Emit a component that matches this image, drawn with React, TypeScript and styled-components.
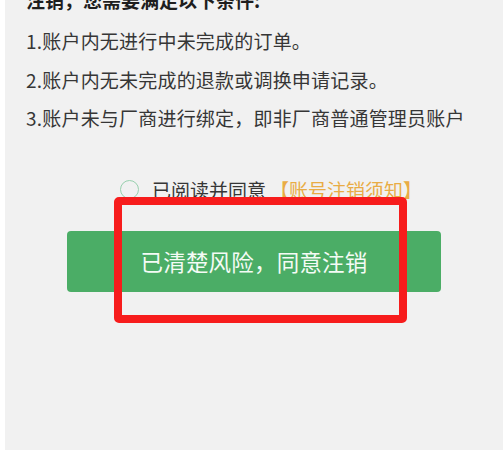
import { createGlobalStyle } from 'styled-components';
import styled from 'styled-components';

const GlobalStyle = createGlobalStyle`
    html, body {
        margin: 0;
        padding: 0;
        background: #ffffff;
    }
    body {
        font-family: "Noto Sans CJK SC", "Noto Sans", sans-serif;
    }
`;

const Screen = styled.div`
    display: flex;
    width: 503px;
    height: 450px;
    padding-left: 5px;
    box-sizing: border-box;
    background: #ffffff;
    overflow: hidden;
`;

const Page = styled.div`
    position: relative;
    flex: 1;
    display: flex;
    flex-direction: column;
    background: #f1f1f1;
`;

const Notice = styled.div`
    display: flex;
    flex-direction: column;
    padding-left: 21px;
    margin-top: -19px;
`;

const Heading = styled.div`
    font-size: 19px;
    line-height: 38px;
    font-weight: 700;
    color: #1e1e1e;
    margin-bottom: 3px;
`;

const Rule = styled.div`
    font-size: 19px;
    line-height: 38.5px;
    color: #363636;
    letter-spacing: 0.2px;
`;

const AgreeRow = styled.label`
    display: flex;
    align-items: center;
    height: 38px;
    margin-top: 33px;
    padding-left: 115px;
    font-size: 19px;
    color: #363636;
`;

const Radio = styled.span`
    width: 17px;
    height: 17px;
    border: 1.5px solid #98d0ae;
    border-radius: 50%;
    margin-right: 13px;
    flex-shrink: 0;
`;

const Link = styled.span`
    color: #e9ac45;
    margin-left: 4px;
`;

const ConfirmButton = styled.button`
    align-self: center;
    width: 374px;
    height: 61px;
    margin-top: 22px;
    border: none;
    border-radius: 4px;
    background: #4bad66;
    color: #f4fbf5;
    font-family: "Noto Sans CJK SC", "Noto Sans", sans-serif;
    font-size: 22.5px;
    letter-spacing: 0.2px;
    cursor: pointer;
`;

const Highlight = styled.div`
    position: absolute;
    left: 109px;
    top: 197px;
    width: 293px;
    height: 126px;
    box-sizing: border-box;
    border: 8.5px solid #f71c1c;
    border-radius: 5px;
    pointer-events: none;
`;

const rules = [
    '1.账户内无进行中未完成的订单。',
    '2.账户内无未完成的退款或调换申请记录。',
    '3.账户未与厂商进行绑定，即非厂商普通管理员账户',
];

export default function App() {
    return (
        <>
            <GlobalStyle />
            <Screen>
                <Page>
                    <Notice>
                        <Heading>注销，您需要满足以下条件:</Heading>
                        {rules.map((r) => (
                            <Rule key={r}>{r}</Rule>
                        ))}
                    </Notice>
                    <AgreeRow>
                        <Radio />
                        已阅读并同意
                        <Link>【账号注销须知】</Link>
                    </AgreeRow>
                    <ConfirmButton>已清楚风险，同意注销</ConfirmButton>
                    <Highlight />
                </Page>
            </Screen>
        </>
    );
}
